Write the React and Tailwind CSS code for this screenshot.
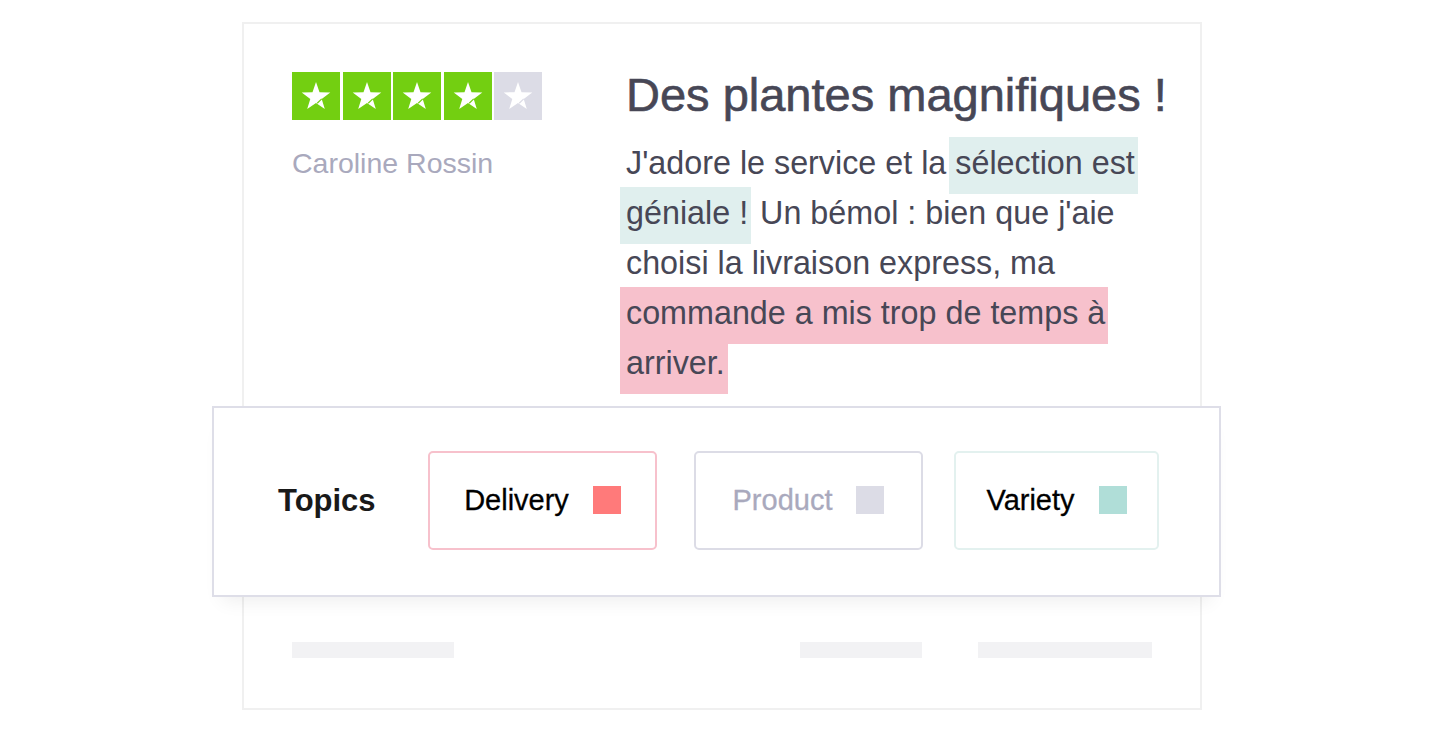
import React from 'react';

const FONT = { fontFamily: '"Liberation Sans", Arial, sans-serif' };

const Star = ({ filled }) => {
    const bg = filled ? '#73cf11' : '#dcdce6';
    return (
        <div className="w-[48px] h-[48px]" style={{ backgroundColor: bg }}>
            <svg width="48" height="48" viewBox="0 0 48 48">
                <polygon
                    points="24,10 27.5,20.2 38.3,20.4 29.7,26.9 32.8,37.1 24,31 15.2,37.1 18.3,26.9 9.7,20.4 20.5,20.2"
                    fill="#ffffff"
                />
                <line x1="29.7" y1="26.9" x2="25.2" y2="31.2" stroke={bg} strokeWidth="1.2" />
            </svg>
        </div>
    );
};

const Chip = ({ label, width, border, text, swatch, className = '' }) => (
    <div
        className={`h-[99px] ${width} flex items-center justify-center gap-[24px] rounded-[5px] border-2 bg-white ${border} ${className}`}
    >
        <span className={`text-[29px] leading-none [-webkit-text-stroke:0.3px_currentColor] ${text}`}>{label}</span>
        <span className={`w-[28px] h-[28px] ${swatch}`} />
    </div>
);

const App = () => {
    return (
        <div className="min-h-screen bg-white pt-[22px]" style={FONT}>
            {/* Review card */}
            <div className="ml-[242px] w-[960px] border-2 border-[#f0f0f0] bg-white">
                <div className="flex pt-[48px] px-[48px]">
                    {/* Left: rating + author */}
                    <div className="w-[334px] shrink-0">
                        <div className="flex gap-[2.5px]">
                            <Star filled />
                            <Star filled />
                            <Star filled />
                            <Star filled />
                            <Star />
                        </div>
                        <div className="mt-[27px] text-[28.5px] leading-[32px] text-[#a9a9bd]">
                            Caroline Rossin
                        </div>
                    </div>

                    {/* Right: review */}
                    <div className="flex-1 min-w-0">
                        <h1 className="text-[47px] leading-[46px] text-[#474756] whitespace-nowrap [-webkit-text-stroke:0.6px_#474756]">
                            Des plantes magnifiques !
                        </h1>
                        <p className="mt-[20px] text-[32.3px] leading-[50px] text-[#474756]">
                            J'adore le service et la{' '}
                            <span className="bg-[#e0efee] pt-[8px] pb-[13px] pr-[3px] shadow-[-6px_0_0_#e0efee] box-decoration-clone">
                                sélection est géniale !
                            </span>{' '}
                            Un bémol : bien que j'aie choisi la livraison express, ma{' '}
                            <span className="bg-[#f7c1cc] pt-[8px] pb-[13px] pr-[3px] shadow-[-6px_0_0_#f7c1cc] box-decoration-clone">
                                commande a mis trop de temps à arriver.
                            </span>
                        </p>
                    </div>
                </div>

                {/* Topics panel */}
                <div className="relative mt-[18px] -ml-[32px] -mr-[21px] h-[191px] border-2 border-[#dedee8] bg-white flex items-center pl-[64px] pb-[3px] shadow-[0_14px_18px_-10px_rgba(0,0,0,0.07)]">
                    <div className="w-[150px] text-[31px] font-bold text-[#191919] leading-none">
                        Topics
                    </div>
                    <Chip
                        label="Delivery"
                        width="w-[229px]"
                        border="border-[#f7c1cc]"
                        text="text-black"
                        swatch="bg-[#ff7a7a]"
                    />
                    <Chip
                        label="Product"
                        width="w-[229px]"
                        border="border-[#dcdce6]"
                        text="text-[#a9a9bd]"
                        swatch="bg-[#dcdce6]"
                        className="ml-[37px]"
                    />
                    <Chip
                        label="Variety"
                        width="w-[205px]"
                        border="border-[#e3f1ef]"
                        text="text-black"
                        swatch="bg-[#b0ded8]"
                        className="ml-[31px]"
                    />
                </div>

                {/* Placeholder footer */}
                <div className="flex items-center px-[48px] pt-[45px] pb-[50px]">
                    <div className="w-[162px] h-[16px] bg-[#f2f2f4]" />
                    <div className="ml-[346px] w-[122px] h-[16px] bg-[#f2f2f4]" />
                    <div className="ml-[56px] w-[174px] h-[16px] bg-[#f2f2f4]" />
                </div>
            </div>
        </div>
    );
};

export default App;
